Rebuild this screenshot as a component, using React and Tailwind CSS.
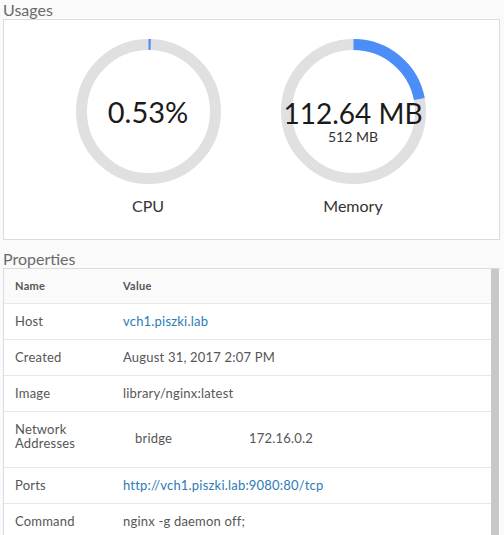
import React from 'react';

const FONT = { fontFamily: 'Lato, "Noto Sans", sans-serif' };

const Gauge = ({ percent, children }) => {
  const size = 145;
  const stroke = 11;
  const r = (size - stroke) / 2;
  const c = 2 * Math.PI * r;
  return (
    <div className="relative w-[145px] h-[145px]">
      <svg width={size} height={size} className="-rotate-90">
        <circle cx={size / 2} cy={size / 2} r={r} fill="none" stroke="#e0e0e0" strokeWidth={stroke} />
        <circle
          cx={size / 2}
          cy={size / 2}
          r={r}
          fill="none"
          stroke="#4b8ef9"
          strokeWidth={stroke}
          strokeDasharray={`${(c * percent) / 100} ${c}`}
        />
      </svg>
      <div className="absolute inset-0 flex flex-col items-center justify-center">{children}</div>
    </div>
  );
};

const ROWS = [
  { name: 'Host', value: 'vch1.piszki.lab', link: true },
  { name: 'Created', value: 'August 31, 2017 2:07 PM' },
  { name: 'Image', value: 'library/nginx:latest' },
];

const Row = ({ name, children, className = 'h-[36px] items-center' }) => (
  <div className={`flex border-t border-[#e8e8e8] text-[13px] tracking-[0.2px] text-[#565656] ${className}`}>
    <div className="w-[119px] pl-[11px] shrink-0">{name}</div>
    <div className="flex-1">{children}</div>
  </div>
);

export default function App() {
  return (
    <div className="w-[504px] h-[535px] overflow-hidden bg-[#fafafa]" style={FONT}>
      <div className="pl-[3px] text-[16px] leading-[19px] text-[#6a6a6a]">Usages</div>
      <div className="ml-[3px] w-[497px] h-[221px] border border-[#dcdcdc] bg-white flex justify-center gap-[60px] pt-[19px] pr-[2px]">
        <div className="flex flex-col items-center">
          <Gauge percent={0.53}>
            <span className="text-[29px] leading-[32px] text-[#1a1a1a]">0.53%</span>
          </Gauge>
          <div className="mt-[12px] text-[16px] leading-[20px] text-[#333]">CPU</div>
        </div>
        <div className="flex flex-col items-center">
          <Gauge percent={22}>
            <span className="mt-[20px] text-[28px] leading-[30px] text-[#1a1a1a] whitespace-nowrap">112.64 MB</span>
            <span className="text-[14px] leading-[18px] text-[#333]">512 MB</span>
          </Gauge>
          <div className="mt-[12px] text-[16px] leading-[20px] text-[#333]">Memory</div>
        </div>
      </div>

      <div className="pl-[3px] mt-[9px] text-[16px] leading-[19px] text-[#6a6a6a]">Properties</div>
      <div className="ml-[3px] w-[497px] h-[300px] border-t border-l border-[#dcdcdc] bg-white flex">
        <div className="flex-1">
          <div className="flex h-[34px] items-center bg-[#fafafa] text-[11px] font-bold tracking-[0.3px] text-[#565656]">
            <div className="w-[119px] pl-[11px]">Name</div>
            <div>Value</div>
          </div>
          {ROWS.map((row) => (
            <Row key={row.name} name={row.name}>
              {row.link ? <span className="text-[#2b7bb9]">{row.value}</span> : row.value}
            </Row>
          ))}
          <Row name={<span className="block leading-[14px]">Network<br />Addresses</span>} className="h-[56px] pt-[10px] items-start">
            <div className="flex pt-[8px] leading-[16px]">
              <span className="w-[126px] pl-[12px]">bridge</span>
              <span>172.16.0.2</span>
            </div>
          </Row>
          <Row name="Ports">
            <span className="text-[#2b7bb9]">http://vch1.piszki.lab:9080:80/tcp</span>
          </Row>
          <Row name="Command">nginx -g daemon off;</Row>
        </div>
        <div className="w-[8px] bg-[#c8c8c8]" />
        <div className="w-[1px]" />
      </div>
    </div>
  );
}
